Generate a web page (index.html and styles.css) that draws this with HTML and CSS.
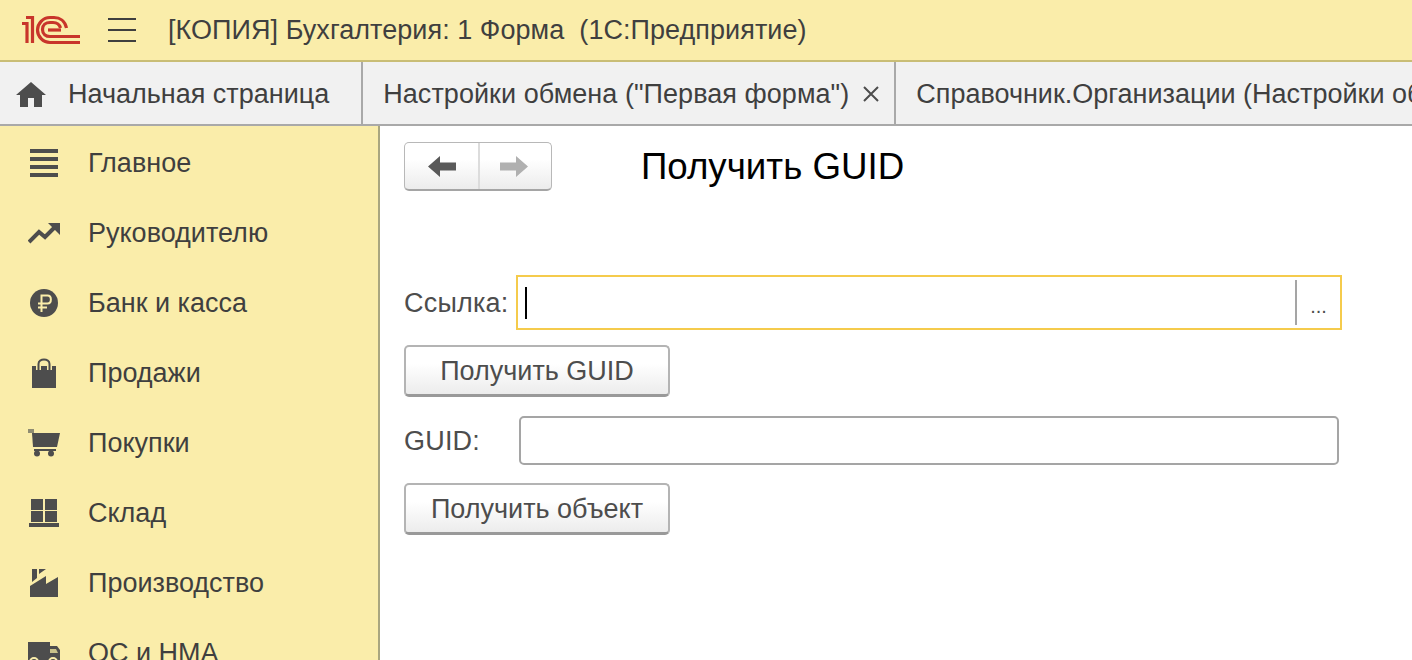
FILE: index.html
```html
<!DOCTYPE html>
<html lang="ru">
<head>
  <meta charset="UTF-8" />
  <title>Получить GUID</title>
  <link rel="stylesheet" href="styles.css">
</head>
<body>
  <header class="topbar">
    <svg class="logo" width="60" height="30" viewBox="0 0 60 30" fill="none" stroke="#c8352b" stroke-width="3.2">
      <path d="M1 8.500H6V28" />
      <path d="M5 2.500H11.500V28" />
      <path d="M59 27.500H29C22 27.500 16.500 21.500 16.500 15S22 2.500 29 2.500H33C39 2.500 44 6 45.500 13" />
      <path d="M59 21.500H29C25 21.500 21.500 19 21.500 14.500S25 7.500 29 7.500H32C36 7.500 38.500 9.500 39.500 13" />
      <path d="M27 15H40" />
    </svg>
    <div class="burger"><span></span><span></span><span></span></div>
    <div class="app-title">[КОПИЯ] Бухгалтерия: 1 Форма&nbsp; (1С:Предприятие)</div>
  </header>

  <nav class="tabs">
    <div class="tab tab-home">
      <svg width="30" height="26" viewBox="0 0 30 26" fill="#4d4d4d"><path d="M15 1L30 14H26V26H18V17H12V26H4V14H0Z" /></svg>
      <span>Начальная страница</span>
    </div>
    <div class="tab tab-active">
      <span>Настройки обмена ("Первая форма")</span>
      <svg class="tab-close" width="16" height="16" viewBox="0 0 16 16" stroke="#4d4d4d" stroke-width="2"><path d="M1 1L15 15M15 1L1 15" /></svg>
    </div>
    <div class="tab tab-last">Справочник.Организации (Настройки обмена)</div>
  </nav>

  <div class="layout">
    <aside class="sidebar">
      <div class="side-item">
        <svg width="30" height="30" viewBox="0 0 30 30" fill="#4d4d4d"><path d="M1 1H29V5H1ZM1 9H29V13H1ZM1 17H29V21H1ZM1 25H29V29H1Z" /></svg>
        <span>Главное</span>
      </div>
      <div class="side-item">
        <svg width="32" height="22" viewBox="0 0 32 22" fill="none" stroke="#4d4d4d" stroke-width="4"><path d="M1 20L11 10L17 15L27 5" /><path d="M20 1H32V13Z" fill="#4d4d4d" stroke="none" /></svg>
        <span>Руководителю</span>
      </div>
      <div class="side-item">
        <svg width="30" height="30" viewBox="0 0 30 30"><circle cx="15" cy="15" r="14" fill="#4d4d4d" /><path d="M12.500 24V7.500H18.500C23 7.500 23 15.500 18.500 15.500H9M9 19.500H18" fill="none" stroke="#faedaa" stroke-width="2" /></svg>
        <span>Банк и касса</span>
      </div>
      <div class="side-item">
        <svg width="24" height="30" viewBox="0 0 24 30" fill="#4d4d4d"><path d="M0 8H4V12H9V8H15V12H20V8H24V30H0Z" /><path d="M6.500 12V6C6.500 0 17.500 0 17.500 6V12" fill="none" stroke="#4d4d4d" stroke-width="2" /></svg>
        <span>Продажи</span>
      </div>
      <div class="side-item">
        <svg width="32" height="28" viewBox="0 0 32 28" fill="#4d4d4d"><path d="M0 0H6V4H0Z" fill="#8f8c72" /><path d="M4 4H32L29 18H5Z" /><path d="M6 20H28V22H6Z" /><circle cx="9" cy="24.500" r="3" /><circle cx="23" cy="24.500" r="3" /></svg>
        <span>Покупки</span>
      </div>
      <div class="side-item">
        <svg width="30" height="28" viewBox="0 0 30 28" fill="#4d4d4d"><path d="M2 0H14V11H2ZM16 0H28V11H16ZM2 12H14V23H2ZM16 12H28V23H16ZM0 24H30V28H0Z" /></svg>
        <span>Склад</span>
      </div>
      <div class="side-item">
        <svg width="28" height="28" viewBox="0 0 28 28" fill="#4d4d4d"><path d="M2 0H7V9L2 13ZM9 0H16L9 5ZM0 17L16 7V15L28 8V28H0Z" /></svg>
        <span>Производство</span>
      </div>
      <div class="side-item">
        <svg class="truck" width="32" height="24" viewBox="0 0 32 24" fill="#4d4d4d"><path d="M0 0H22V20H0ZM22 4H29L32 8V20H22Z" /><path d="M22 7H28L30 11H22Z" fill="#c9c28a" /><circle cx="6" cy="20" r="4" stroke="#faedaa" stroke-width="2" /><circle cx="25" cy="20" r="4" stroke="#faedaa" stroke-width="2" /></svg>
        <span>ОС и НМА</span>
      </div>
    </aside>

    <main class="form">
      <div class="form-head">
        <div class="nav-group">
          <button class="nav-btn nav-back">
            <svg width="28" height="21" viewBox="0 0 28 21" fill="#595959"><path d="M0 10.500L12 0V6.500H28V14.500H12V21Z" /></svg>
          </button>
          <button class="nav-btn nav-forward">
            <svg width="28" height="21" viewBox="0 0 28 21" fill="#b0b0b0"><path d="M28 10.500L16 0V6.500H0V14.500H16V21Z" /></svg>
          </button>
        </div>
        <h1 class="form-title">Получить GUID</h1>
      </div>

      <div class="field-row link-row">
        <label class="field-label">Ссылка:</label>
        <div class="input input-focus">
          <span class="caret"></span>
          <span class="pick-btn">...</span>
        </div>
      </div>
      <button class="btn">Получить GUID</button>
      <div class="field-row guid-row">
        <label class="field-label guid-label">GUID:</label>
        <div class="input input-plain"></div>
      </div>
      <button class="btn btn-object">Получить объект</button>
    </main>
  </div>
</body>
</html>
```

FILE: styles.css
```css
html, body {
  margin: 0; padding: 0; height: 100%; overflow: hidden;
  font-family: 'Liberation Sans', Arial, sans-serif;
  color: #4d4d4d; background: #fff;
}
body { display: flex; flex-direction: column; }

.topbar {
  height: 60px; flex: none; display: flex; align-items: center;
  background: #faedaa; border-bottom: 2px solid #c9bd75;
  padding-left: 21px; font-size: 27px; color: #3f3f3f;
}
.logo { flex: none; }
.burger {
  width: 28px; margin-left: 27px; margin-right: 32px;
  display: flex; flex-direction: column; gap: 9px;
}
.burger span { height: 2px; background: #3f3f3f; }
.app-title { white-space: nowrap; letter-spacing: 0.05px; }

.tabs {
  height: 62px; flex: none; display: flex; background: #f1f1f1;
  border-bottom: 2px solid #a9a9a9; font-size: 27px; color: #3f3f3f;
  overflow: hidden;
}
.tab {
  display: flex; align-items: center; white-space: nowrap;
  padding: 2px 21px 0; border-right: 2px solid #a9a9a9;
}
.tab-home { gap: 22px; padding-left: 16px; padding-right: 32px; }
.tab-active { gap: 14px; padding-left: 20px; padding-right: 15px; letter-spacing: 0.05px; }
.tab-close { flex: none; }
.tab-last { border-right: none; padding-left: 20px; }

.layout { flex: 1; display: flex; min-height: 0; }

.sidebar {
  width: 378px; flex: none; background: #faedaa;
  border-right: 2px solid #a9a67f; overflow: hidden;
  font-size: 27px; color: #3f3f3f; padding-top: 2px;
}
.side-item { height: 70px; display: flex; align-items: center; position: relative; padding-left: 88px; }
.side-item svg { position: absolute; left: 44px; top: 50%; transform: translate(-50%, -50%); }
.side-item svg.truck { transform: translate(-50%, -11px); }

.form { flex: 1; padding: 16px 24px 0; min-width: 0; font-size: 27px; }
.form-head { display: flex; align-items: flex-start; height: 50px; }
.nav-group {
  display: flex; width: 148px; height: 49px; box-sizing: border-box;
  border: 1px solid #b8b8b8; border-bottom: 2px solid #a5a5a5; border-radius: 5px;
  background: linear-gradient(#fff 35%, #ececec);
}
.nav-btn {
  flex: none; padding: 0; border: none; background: none;
  display: flex; align-items: center; justify-content: center;
}
.nav-back { width: 73px; }
.nav-forward { width: 73px; padding-right: 4px; border-left: 2px solid #dcdcdc; }
.form-title { margin: 4px 0 0 89px; font-size: 36.7px; font-weight: normal; color: #000; }

.field-row { display: flex; align-items: center; }
.field-label { flex: none; width: 112px; padding-top: 2px; letter-spacing: 0.2px; }
.link-row { margin-top: 83px; }
.guid-row { margin-top: 19px; }
.guid-label { width: 115px; }

.input { box-sizing: border-box; background: #fff; }
.input-focus {
  width: 826px; height: 55px; border: 2px solid #f5cb4c; display: flex; align-items: center;
  padding-left: 7px;
}
.caret { width: 2px; height: 32px; background: #000; }
.pick-btn {
  margin-left: auto; width: 45px; height: 45px; box-sizing: border-box;
  border-left: 2px solid #a5a5a5; text-align: center; font-size: 20px; line-height: 52px;
}
.input-plain { width: 820px; height: 49px; border: 2px solid #a5a5a5; border-radius: 5px; }

.btn {
  display: block; box-sizing: border-box; width: 266px; height: 52px; margin-top: 15px; padding: 2px 0 0;
  border: 2px solid #b4b4b4; border-bottom: 3px solid #999; border-radius: 5px;
  background: linear-gradient(#fff 35%, #ececec);
  font: inherit; color: #4d4d4d;
}
.btn-object { margin-top: 18px; }
```
